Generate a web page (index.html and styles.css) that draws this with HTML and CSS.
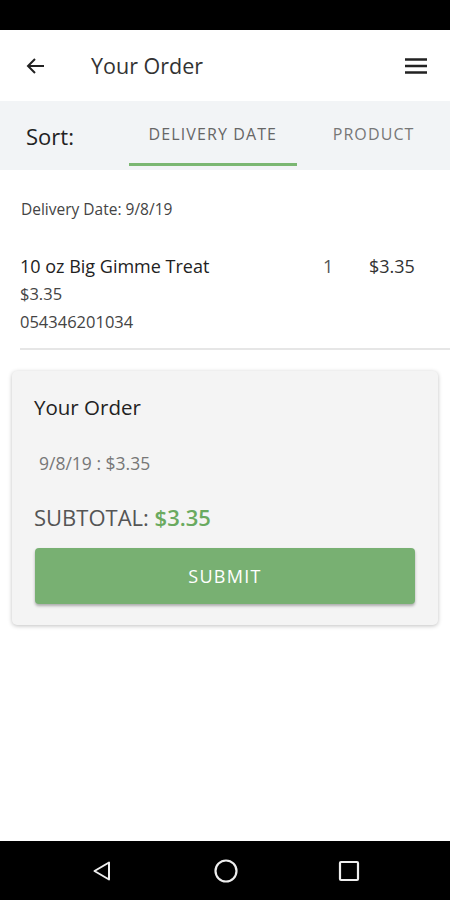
FILE: index.html
```html
<!DOCTYPE html>
<html lang="en">
<head>
  <meta charset="UTF-8">
  <meta name="viewport" content="width=device-width, initial-scale=1.0">
  <title>Your Order</title>
  <link rel="stylesheet" href="styles.css">
</head>
<body>
  <div class="status-bar"></div>

  <div class="app-bar">
    <svg class="back" width="24" height="24" viewBox="0 0 24 24">
      <path d="M20 12H5M11 5l-7 7 7 7" fill="none" stroke="#222" stroke-width="2"/>
    </svg>
    <h1 class="title">Your Order</h1>
    <svg class="menu" width="24" height="24" viewBox="0 0 24 24">
      <path d="M1 5.5h22M1 12h22M1 18.5h22" fill="none" stroke="#222" stroke-width="2.4"/>
    </svg>
  </div>

  <div class="sort-bar">
    <div class="sort-label">Sort:</div>
    <div class="tab active">DELIVERY DATE</div>
    <div class="tab">PRODUCT</div>
  </div>

  <div class="content">
    <div class="date-head">Delivery Date: 9/8/19</div>

    <div class="item">
      <div class="item-info">
        <div class="item-name">10 oz Big Gimme Treat</div>
        <div class="item-sub">$3.35</div>
        <div class="item-sub">054346201034</div>
      </div>
      <div class="item-qty">1</div>
      <div class="item-price">$3.35</div>
    </div>

    <div class="card">
      <h2 class="card-title">Your Order</h2>
      <div class="card-line">9/8/19 : $3.35</div>
      <div class="subtotal">SUBTOTAL: <span class="amount">$3.35</span></div>
      <button class="submit">SUBMIT</button>
    </div>
  </div>

  <div class="nav-bar">
    <svg width="24" height="24" viewBox="0 0 24 24">
      <path d="M19 3.5v17L4.5 12z" fill="none" stroke="#eee" stroke-width="2" stroke-linejoin="round"/>
    </svg>
    <svg width="26" height="26" viewBox="0 0 26 26">
      <circle cx="13" cy="13" r="10.5" fill="none" stroke="#eee" stroke-width="2.2"/>
    </svg>
    <svg width="22" height="22" viewBox="0 0 22 22">
      <rect x="2" y="2" width="18" height="18" rx="1" fill="none" stroke="#eee" stroke-width="2.2"/>
    </svg>
  </div>
</body>
</html>
```

FILE: styles.css
```css
body {
  margin: 0;
  width: 450px;
  height: 900px;
  display: flex;
  flex-direction: column;
  font-family: "Open Sans", "Noto Sans", sans-serif;
  background-color: #fff;
  color: #222;
}
.status-bar {
  height: 30px;
  background-color: #000;
}
.app-bar {
  height: 71px;
  display: flex;
  align-items: center;
  padding: 0 22px 0 24px;
}
.back {
  margin-right: 43px;
}
.title {
  flex: 1;
  margin: 0;
  font-size: 21.5px;
  font-weight: normal;
  color: #333;
}
.sort-bar {
  height: 69px;
  display: flex;
  align-items: stretch;
  background-color: #f2f4f6;
}
.sort-label {
  width: 130px;
  padding-left: 26px;
  box-sizing: border-box;
  display: flex;
  align-items: center;
  font-size: 22px;
  color: #222;
}
.tab {
  width: 171px;
  display: flex;
  align-items: center;
  justify-content: center;
  font-size: 16px;
  letter-spacing: 1.1px;
  color: #666;
  border-bottom: 3px solid transparent;
  padding-top: 3px;
  box-sizing: border-box;
  margin-bottom: 4px;
}
.tab.active {
  border-bottom-color: #7bb772;
}
.tab + .tab {
  width: 155px;
  color: #777;
}
.content {
  flex: 1;
}
.date-head {
  padding: 28px 0 0 21px;
  font-size: 15.5px;
  color: #444;
}
.item {
  display: flex;
  margin: 34px 0 0 20px;
  padding-bottom: 12px;
  border-bottom: 2px solid #e6e6e6;
}
.item-info {
  flex: 1;
}
.item-name {
  font-size: 18px;
  color: #222;
  margin-bottom: 2px;
}
.item-sub {
  font-size: 16.5px;
  color: #444;
  line-height: 28px;
}
.item-qty {
  width: 46px;
  font-size: 18px;
  color: #555;
}
.item-price {
  width: 81px;
  font-size: 18px;
  color: #333;
}
.card {
  margin: 21px 12px 0;
  padding: 22px 22px 21px 22px;
  background-color: #f4f4f4;
  border-radius: 5px;
  box-shadow: 0 1px 4px rgba(0, 0, 0, 0.25);
}
.card-title {
  margin: 0;
  font-size: 20.5px;
  font-weight: normal;
  color: #222;
}
.card-line {
  margin: 30px 0 0 5px;
  font-size: 17.5px;
  color: #777;
}
.subtotal {
  margin-top: 27px;
  font-size: 22px;
  color: #555;
}
.amount {
  color: #6aaa5f;
  font-weight: 600;
}
.submit {
  display: block;
  width: 380px;
  height: 56px;
  margin: 16px 0 0 1px;
  border: none;
  border-radius: 4px;
  background-color: #78b072;
  box-shadow: 0 2px 3px rgba(0, 0, 0, 0.3);
  color: #fff;
  font-family: inherit;
  font-size: 18px;
  letter-spacing: 1.3px;
}
.nav-bar {
  height: 59px;
  display: flex;
  align-items: center;
  justify-content: center;
  gap: 99px;
  background-color: #000;
}
```
